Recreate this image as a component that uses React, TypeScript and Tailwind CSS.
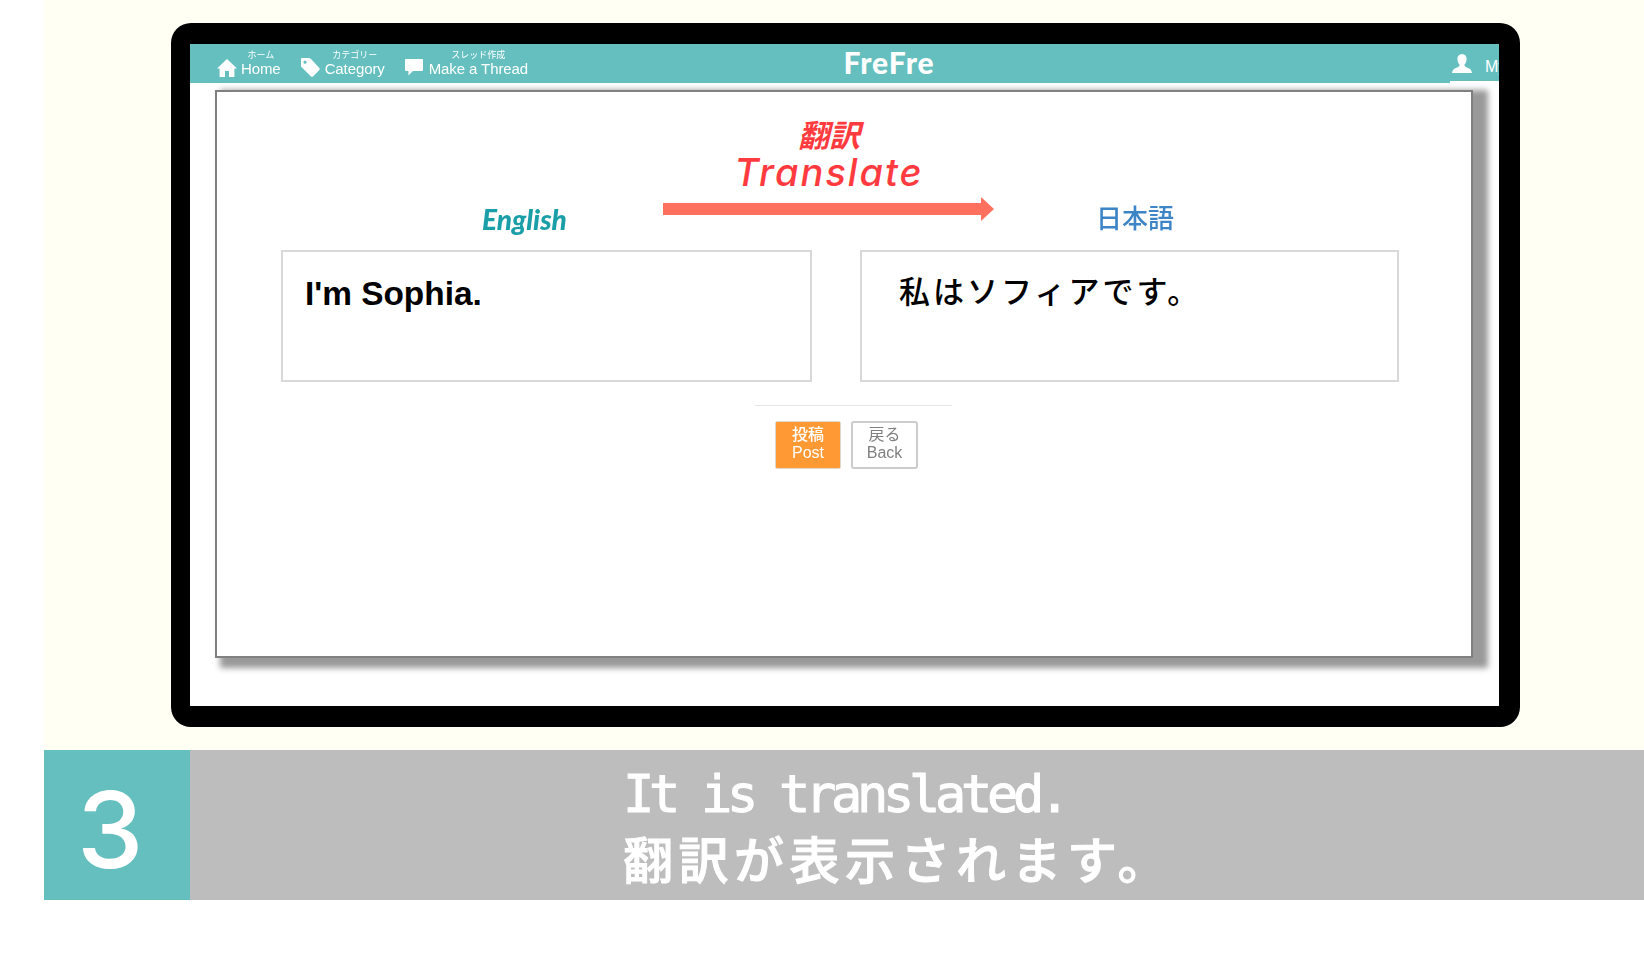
const cjk = "font-['Noto_Sans_CJK_JP',sans-serif]";

function HomeIcon() {
  return (
    <svg width="20" height="18" viewBox="0 0 20 18" fill="white">
      <path d="M10 0 L20 9.5 L17.4 9.5 L17.4 18 L12 18 L12 12 L8 12 L8 18 L2.6 18 L2.6 9.5 L0 9.5 Z" />
    </svg>
  );
}

function TagIcon() {
  return (
    <svg width="19" height="19" viewBox="0 0 19 19" fill="white">
      <path fillRule="evenodd" d="M1 0 H8 Q9 0 10 1 L18.4 10 Q19 11 18.4 12 L12 18.4 Q11 19 10 18.4 L1 9.6 Q0 9 0 8 V1 Q0 0 1 0 Z M4 2.6 A1.6 1.6 0 1 0 4 5.8 A1.6 1.6 0 1 0 4 2.6 Z" />
    </svg>
  );
}

function ChatIcon() {
  return (
    <svg width="18" height="17" viewBox="0 0 18 17" fill="white">
      <path d="M1 0 H17 Q18 0 18 1 V11 Q18 12 17 12 H8 L3.4 16.5 V12 H1 Q0 12 0 11 V1 Q0 0 1 0 Z" />
    </svg>
  );
}

function UserIcon() {
  return (
    <svg width="20" height="19" viewBox="0 0 20 19" fill="white">
      <path d="M10 0 C13 0 14.6 2.2 14.6 5 C14.6 7.6 13.4 9.6 12.4 10.8 C12.4 12.4 13.6 13 15.6 13.8 C18 14.8 19.6 16 20 19 H0 C0.4 16 2 14.8 4.4 13.8 C6.4 13 7.6 12.4 7.6 10.8 C6.6 9.6 5.4 7.6 5.4 5 C5.4 2.2 7 0 10 0 Z" />
    </svg>
  );
}

function NavItem({ icon, jp, en, gap }: { icon: React.ReactNode; jp: string; en: string; gap: string }) {
  return (
    <div className={`flex items-center whitespace-nowrap ${gap}`}>
      <div className="mt-[8px]">{icon}</div>
      <div className="flex flex-col items-center -mt-[2px] blur-[0.3px]">
        <span className={`text-[9px] leading-[11px] text-white ${cjk}`}>{jp}</span>
        <span className="text-[15px] leading-[17px] tracking-[-0.1px] text-white font-['Liberation_Sans',sans-serif]">{en}</span>
      </div>
    </div>
  );
}

export default function App() {
  return (
    <div className="w-[1644px] h-[956px] bg-white pl-[44px] overflow-hidden">
      <section className="h-[750px] bg-[#fffff4] pt-[23px] pl-[127px]">
        <div className="w-[1349px] h-[704px] bg-white border-black border-l-[19px] border-r-[21px] border-y-[21px] rounded-[20px] overflow-hidden">
          <nav className="h-[39px] bg-[#65bfbf] flex items-center pl-[27px] overflow-hidden">
            <NavItem icon={<HomeIcon />} jp="ホーム" en="Home" gap="gap-[4px]" />
            <div className="ml-[20px]">
              <NavItem icon={<TagIcon />} jp="カテゴリー" en="Category" gap="gap-[5px]" />
            </div>
            <div className="ml-[20px]">
              <NavItem icon={<ChatIcon />} jp="スレッド作成" en="Make a Thread" gap="gap-[6px]" />
            </div>
            <div className="ml-[314px] w-[94px] -mt-[3px] shrink-0 text-center text-[30px] leading-[36px] font-black tracking-[1px] text-white font-['Lato',sans-serif]">
              FreFre
            </div>
            <div className="ml-[514px] w-[60px] h-[39px] shrink-0 flex gap-[13px] items-center border-b-[2px] border-white pl-[2px] pt-[2px]">
              <UserIcon />
              <span className="text-[16px] text-white font-['Liberation_Sans',sans-serif] mt-[6px]">My</span>
            </div>
          </nav>

          <div className="pt-[7px] pl-[25px]">
            <div className="w-[1258px] h-[568px] bg-white border-2 border-[#808080] shadow-[10px_5px_6px_5px_#999999]">
              <div className="flex ml-[265px] h-[158px]">
                <div className="w-[181px] self-end pb-[14px] text-[28px] leading-[34px] font-black italic text-[#1a9fa8] blur-[0.6px] font-['Lato',sans-serif]">
                  English
                </div>
                <div className="w-[332px] flex flex-col items-center pt-[26px]">
                  <div className={`text-[31px] leading-[32px] font-bold italic text-[#ff3b40] ${cjk}`}>翻訳</div>
                  <div className="text-[38px] leading-[40px] mt-[2px] italic font-medium tracking-[2px] text-[#ff3b40] font-['Inter',sans-serif]">
                    Translate
                  </div>
                  <div className="w-full flex items-center mt-[5px]">
                    <div className="w-[318px] h-[12px] bg-[#ff705f]" />
                    <svg width="13" height="24" viewBox="0 0 13 24" fill="#ff705f">
                      <path d="M0 0 L13 12 L0 24 Z" />
                    </svg>
                  </div>
                </div>
                <div className={`ml-[101px] self-end pb-[14px] text-[26px] leading-[38px] font-medium text-[#3d85c6] blur-[0.6px] ${cjk}`}>
                  日本語
                </div>
              </div>

              <div className="flex ml-[64px] gap-[48px]">
                <div className="w-[531px] h-[132px] border-2 border-[#d9d9d9] pl-[22px] pt-[22px] text-[33.4px] leading-[40px] font-bold text-black font-['Liberation_Sans',sans-serif]">
                  I'm Sophia.
                </div>
                <div className={`w-[539px] h-[132px] border-2 border-[#d9d9d9] pl-[37px] pt-[18px] text-[31px] leading-[40px] tracking-[3px] font-medium text-black ${cjk}`}>
                  私はソフィアです。
                </div>
              </div>

              <div className="ml-[538px] mt-[23px] w-[197px] h-px bg-[#e5e5e5]" />

              <div className="flex ml-[558px] mt-[15px] gap-[10px] blur-[0.3px]">
                <div className="w-[66px] h-[48px] bg-[#ff9933] border border-[#e0d8cc] rounded-[2px] flex flex-col items-center pt-[2px] text-white text-[16px] leading-[19px] font-medium">
                  <span className={cjk}>投稿</span>
                  <span className="font-['Liberation_Sans',sans-serif]">Post</span>
                </div>
                <div className="w-[67px] h-[48px] bg-white border-2 border-[#cccccc] rounded-[3px] flex flex-col items-center pt-[1px] text-[#808080] text-[16px] leading-[19px]">
                  <span className={cjk}>戻る</span>
                  <span className="font-['Liberation_Sans',sans-serif]">Back</span>
                </div>
              </div>
            </div>
          </div>
        </div>
      </section>

      <section className="h-[150px] flex">
        <div className="w-[146px] bg-[#65bfbf] flex items-center pl-[33px] pt-[9px] text-[106px] leading-none font-medium text-white font-['Inter',sans-serif]">
          3
        </div>
        <div className="flex-1 bg-[#bdbdbd] pl-[433px] pt-[12px] text-white">
          <div className="text-[52px] leading-[64px] tracking-[-5.3px] [-webkit-text-stroke:1px_white] font-['DejaVu_Sans_Mono',monospace]">It is translated.</div>
          <div className={`text-[50px] leading-[62px] tracking-[5.5px] font-medium [-webkit-text-stroke:1px_white] ${cjk}`}>翻訳が表示されます。</div>
        </div>
      </section>
    </div>
  );
}
